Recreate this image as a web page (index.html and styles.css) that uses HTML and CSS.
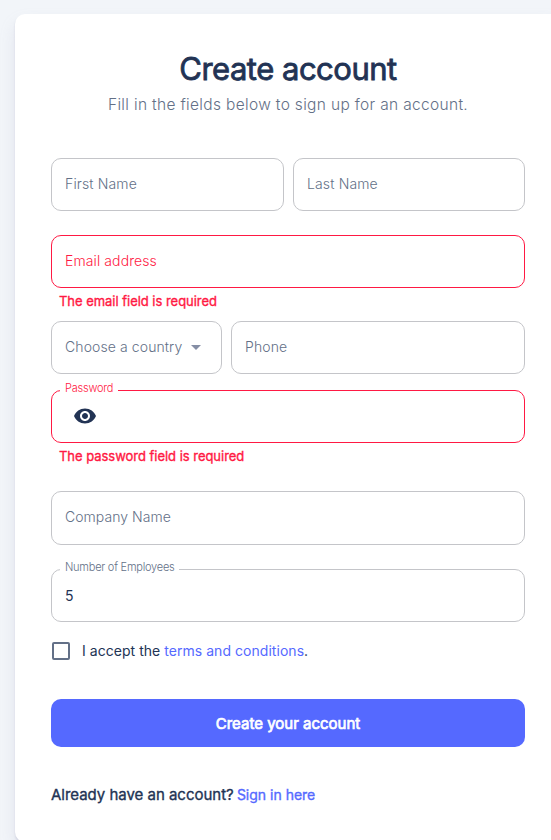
FILE: index.html
```html
<!DOCTYPE html>
<html lang="en">
<head>
<meta charset="utf-8">
<title>Create account</title>
<link rel="stylesheet" href="styles.css">
</head>
<body>
<main class="card">
  <h1 class="title">Create account</h1>
  <p class="subtitle">Fill in the fields below to sign up for an account.</p>
  <form class="form">
    <div class="row row-names">
      <div class="field"><span class="placeholder">First Name</span></div>
      <div class="field"><span class="placeholder">Last Name</span></div>
    </div>
    <div class="field error email"><span class="placeholder">Email address</span></div>
    <p class="helper">The email field is required</p>
    <div class="row row-phone">
      <div class="field country"><span class="placeholder">Choose a country</span><i class="caret"></i></div>
      <div class="field"><span class="placeholder">Phone</span></div>
    </div>
    <div class="field error password">
      <span class="label">Password</span>
      <svg class="eye" viewBox="0 0 24 24"><path d="M12 4.5C7 4.5 2.73 7.61 1 12c1.73 4.39 6 7.5 11 7.5s9.27-3.11 11-7.5c-1.73-4.39-6-7.5-11-7.5zM12 17c-2.76 0-5-2.24-5-5s2.24-5 5-5 5 2.24 5 5-2.24 5-5 5zm0-8c-1.66 0-3 1.34-3 3s1.34 3 3 3 3-1.34 3-3-1.34-3-3-3z"/></svg>
    </div>
    <p class="helper">The password field is required</p>
    <div class="field company"><span class="placeholder">Company Name</span></div>
    <div class="field employees"><span class="label">Number of Employees</span><span class="value">5</span></div>
    <div class="terms"><i class="checkbox"></i><span class="terms-text">I accept the <a class="link">terms and conditions</a>.</span></div>
    <button class="submit" type="button">Create your account</button>
  </form>
  <p class="signin">Already have an account? <a class="link">Sign in here</a></p>
</main>
</body>
</html>
```
FILE: styles.css
```css
* { box-sizing: border-box; }
body {
  margin: 0;
  height: 840px;
  overflow: hidden;
  padding: 14px 0 0 15px;
  background: #f2f5f9;
  font-family: Inter, sans-serif;
  color: #223354;
}
p, h1 { margin: 0; }
.card {
  width: 546px;
  height: 828px;
  padding: 36px 36px 0;
  background: #fff;
  border-radius: 10px;
  box-shadow: 0 9px 16px rgba(159, 162, 191, .18), 0 2px 2px rgba(159, 162, 191, .32);
}
.title { font-size: 31px; line-height: 38px; font-weight: 400; letter-spacing: -.5px; text-align: center; -webkit-text-stroke: .8px; }
.subtitle { margin-top: 4px; padding-top: 1px; font-size: 15.5px; line-height: 24px; font-weight: 300; letter-spacing: .33px; text-align: center; color: #637087; }
.form { margin-top: 41px; }
.row { display: grid; gap: 9px; }
.row-names { grid-template-columns: 233px 232px; }
.row-phone { grid-template-columns: 171px 294px; margin-top: 11px; }
.field {
  position: relative;
  display: flex;
  align-items: center;
  height: 53px;
  padding: 0 13px;
  border: 1px solid #c4c5c9;
  border-radius: 10px;
}
.placeholder { padding-bottom: 2px; font-size: 14px; line-height: 20px; font-weight: 300; letter-spacing: .1px; color: #637087; }
.row-names .placeholder { letter-spacing: .14px; }
.company .placeholder { letter-spacing: .04px; }
.error { border-color: #ff1943; }
.error .placeholder, .error .label { color: #ff1943; }
.email { margin-top: 24px; }
.helper { margin: 4px 0 0 8px; font-size: 13px; line-height: 18px; font-weight: 400; letter-spacing: -.03px; color: #ff1943; -webkit-text-stroke: .35px; }
.caret { margin: 0 0 1px 9px; border: 5px solid transparent; border-top-color: #858ea5; border-bottom: 0; }
.password { margin-top: 16px; }
.label { position: absolute; left: 8px; top: -10px; padding: 0 5px; background: #fff; font-size: 11px; line-height: 14px; font-weight: 300; letter-spacing: -.23px; color: #637087; }
.eye { width: 24px; height: 24px; margin: 0 0 2px 8px; fill: #223354; }
.company { margin-top: 26px; height: 54px; }
.employees { margin-top: 24px; }
.value { font-size: 14px; }
.terms { display: flex; align-items: center; height: 24px; margin-top: 17px; font-size: 14px; }
.terms-text { padding-bottom: 2px; font-size: 14px; letter-spacing: .04px; }
.checkbox { width: 18px; height: 18px; margin: 0 12px 0 1px; border: 2px solid #637087; border-radius: 2px; }
.link { color: #5569ff; }
.submit { display: block; width: 100%; height: 48px; margin-top: 36px; border: 0; border-radius: 10px; background: #5569ff; color: #fff; font: 400 15px Inter, sans-serif; -webkit-text-stroke: .7px; }
.signin { margin-top: 36px; font-size: 15px; line-height: 24px; font-weight: 400; letter-spacing: -.02px; -webkit-text-stroke: .35px; }
.signin .link { margin-left: -1px; font-size: 14px; letter-spacing: 0; }
```
